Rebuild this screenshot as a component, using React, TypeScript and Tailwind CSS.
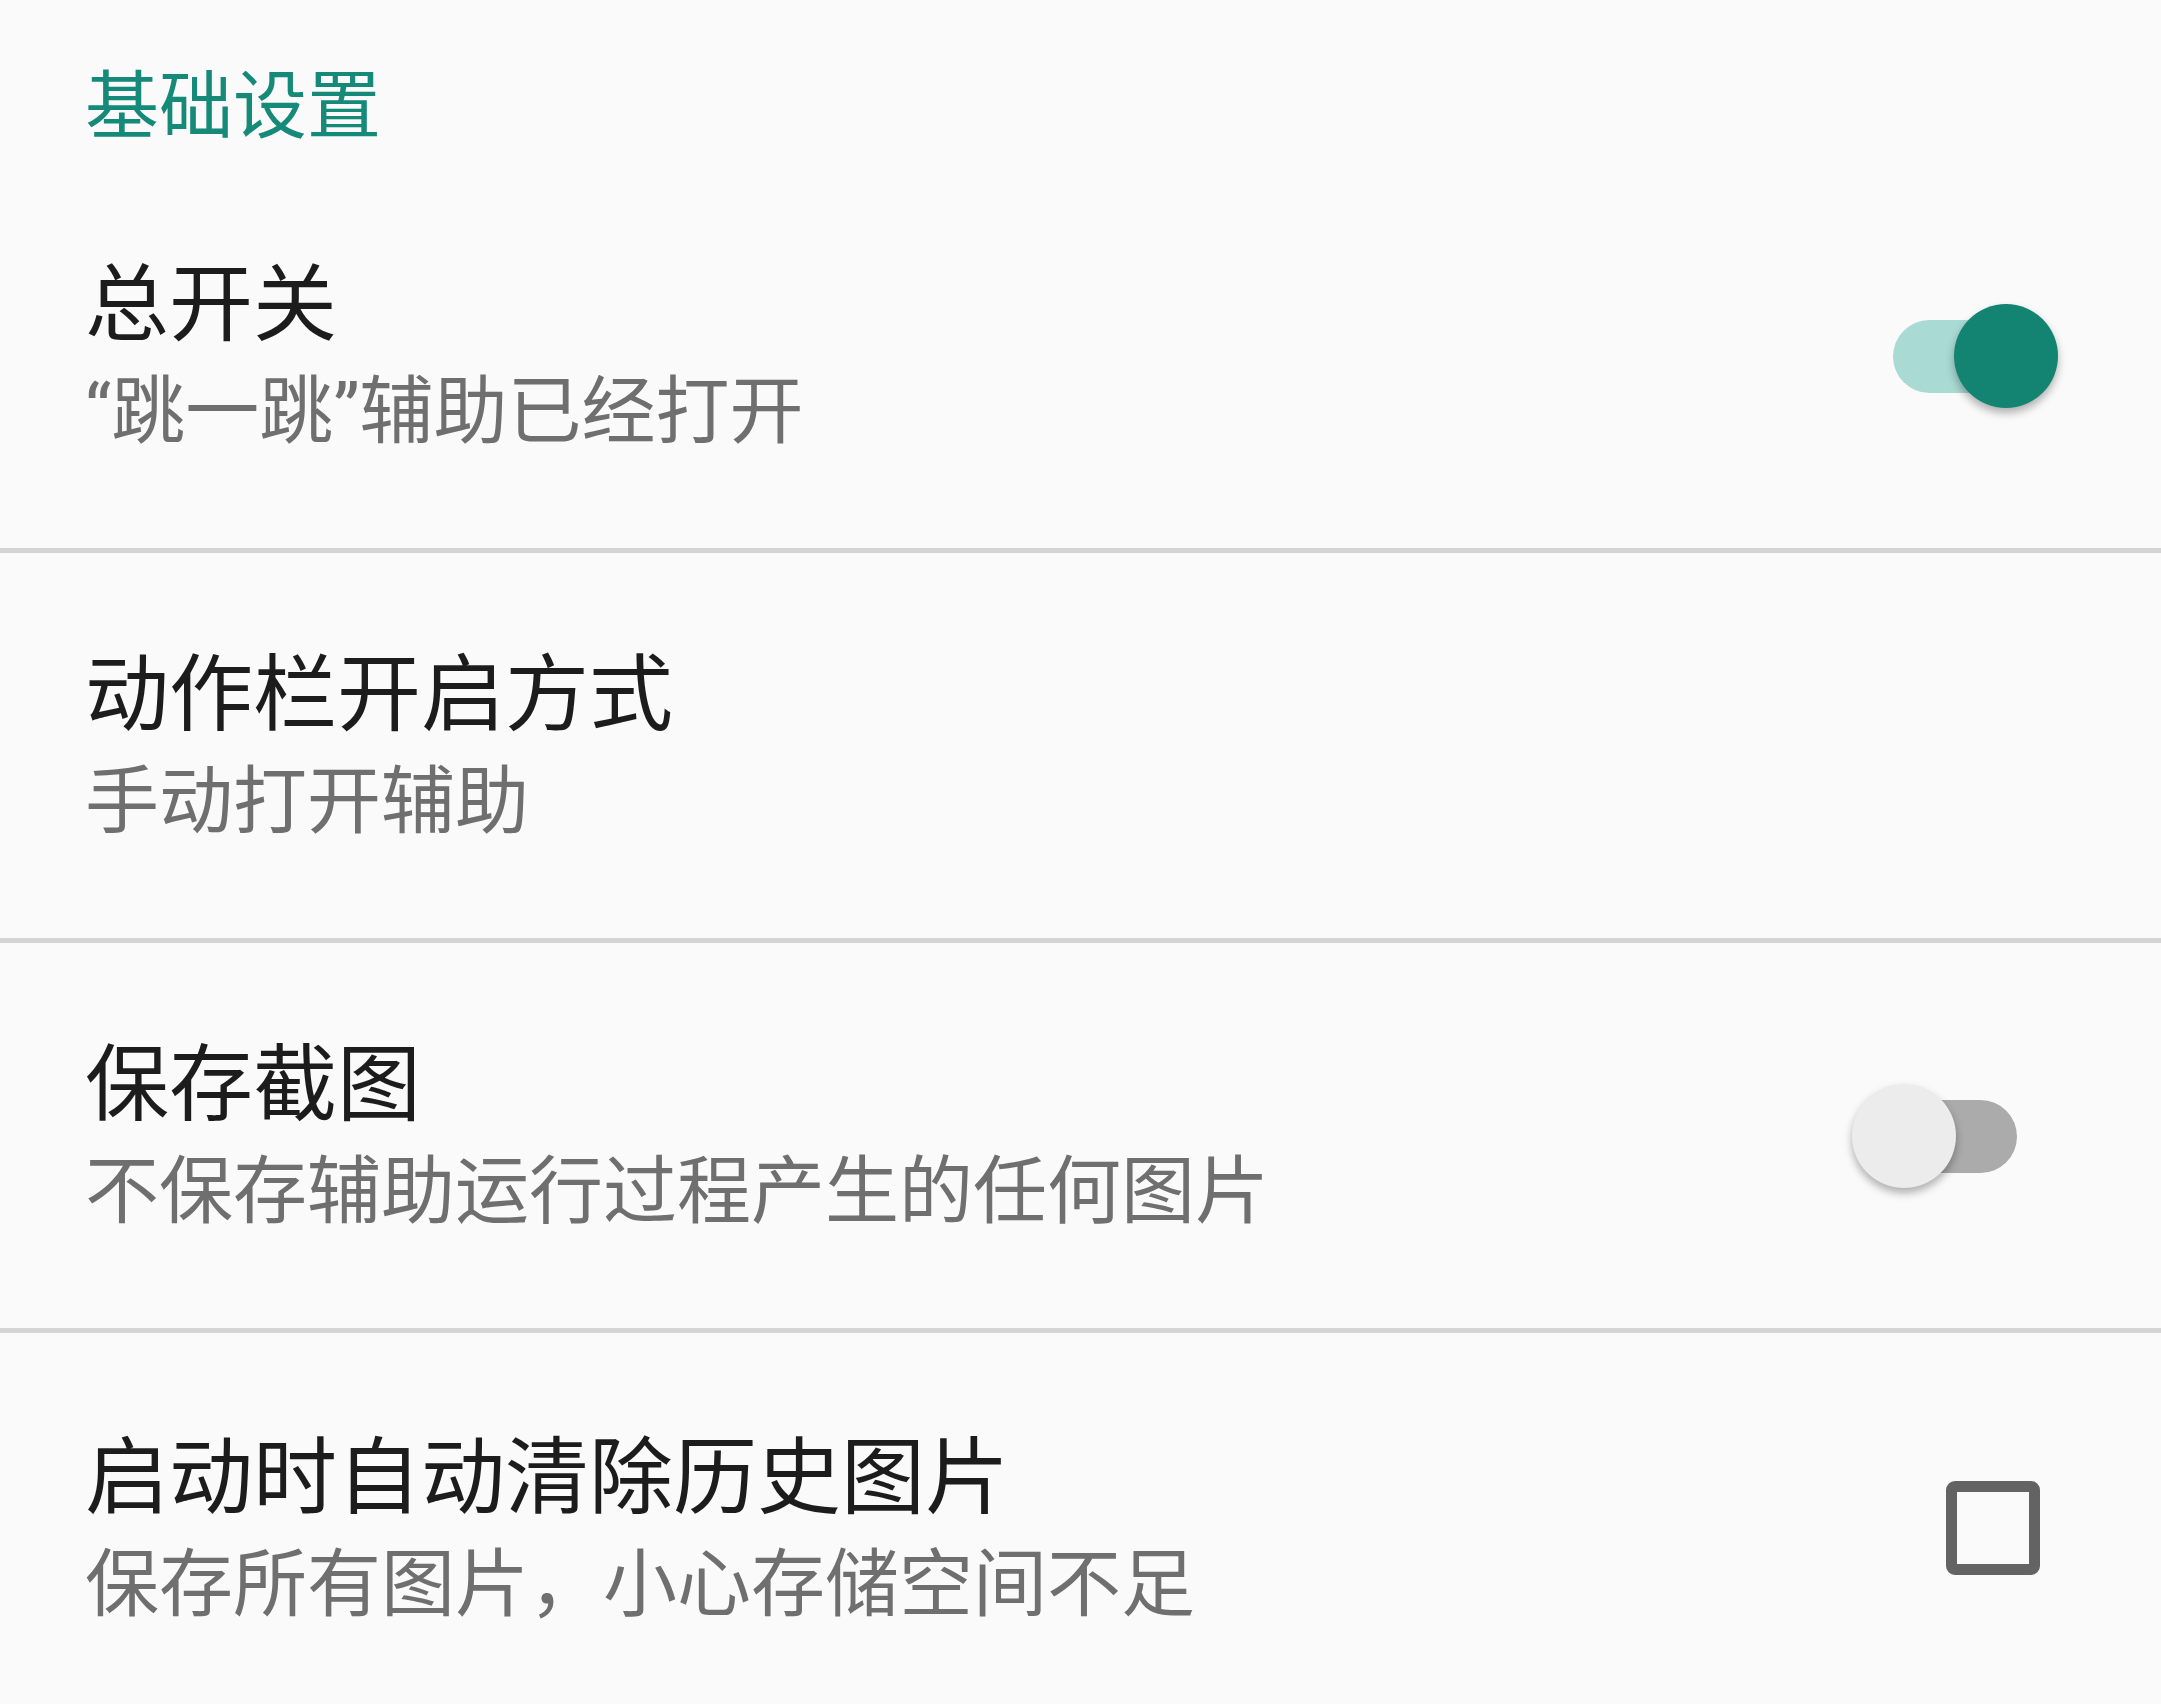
import React from "react";

const FONT = { fontFamily: 'Roboto, "Noto Sans CJK SC", sans-serif' };

function Switch({ on }: { on: boolean }) {
  return (
    <div className="relative w-[206px] h-[104px] shrink-0 mr-[103px]">
      <div
        className={
          "absolute left-[41px] top-[16px] w-[124px] h-[73px] rounded-full " +
          (on ? "bg-[#a9dad3]" : "bg-[#ababab]")
        }
      />
      <div
        className={
          "absolute top-0 w-[104px] h-[104px] rounded-full shadow-[0_5px_9px_rgba(0,0,0,0.3)] " +
          (on ? "left-[102px] bg-[#128471]" : "left-0 bg-[#ececec]")
        }
      />
    </div>
  );
}

function Checkbox() {
  return (
    <div className="shrink-0 mr-[121px] w-[94px] h-[94px] rounded-[9px] border-[11px] border-[#636363]" />
  );
}

function Row({
  title,
  summary,
  widget,
  divider = true,
}: {
  title: string;
  summary: string;
  widget?: React.ReactNode;
  divider?: boolean;
}) {
  return (
    <div
      className={
        "flex items-center h-[390px] pl-[85px] " +
        (divider ? "border-b-[5px] border-[#d4d4d4]" : "")
      }
    >
      <div className="flex flex-col flex-1 min-w-0">
        <div className="text-[84px] leading-[113px] text-[#1c1c1c] whitespace-nowrap">{title}</div>
        <div className="text-[74px] leading-[100px] text-[#6f6f6f] whitespace-nowrap">{summary}</div>
      </div>
      {widget}
    </div>
  );
}

export default function App() {
  return (
    <div className="w-full h-[1704px] overflow-hidden bg-[#fafafa]" style={FONT}>
      <div className="h-[163px] pl-[85px] pt-[57px]">
        <div className="text-[74px] leading-[100px] text-[#168a78]">基础设置</div>
      </div>
      <Row title="总开关" summary="“跳一跳”辅助已经打开" widget={<Switch on={true} />} />
      <Row title="动作栏开启方式" summary="手动打开辅助" />
      <Row title="保存截图" summary="不保存辅助运行过程产生的任何图片" widget={<Switch on={false} />} />
      <Row
        title="启动时自动清除历史图片"
        summary="保存所有图片，小心存储空间不足"
        widget={<Checkbox />}
        divider={false}
      />
    </div>
  );
}
